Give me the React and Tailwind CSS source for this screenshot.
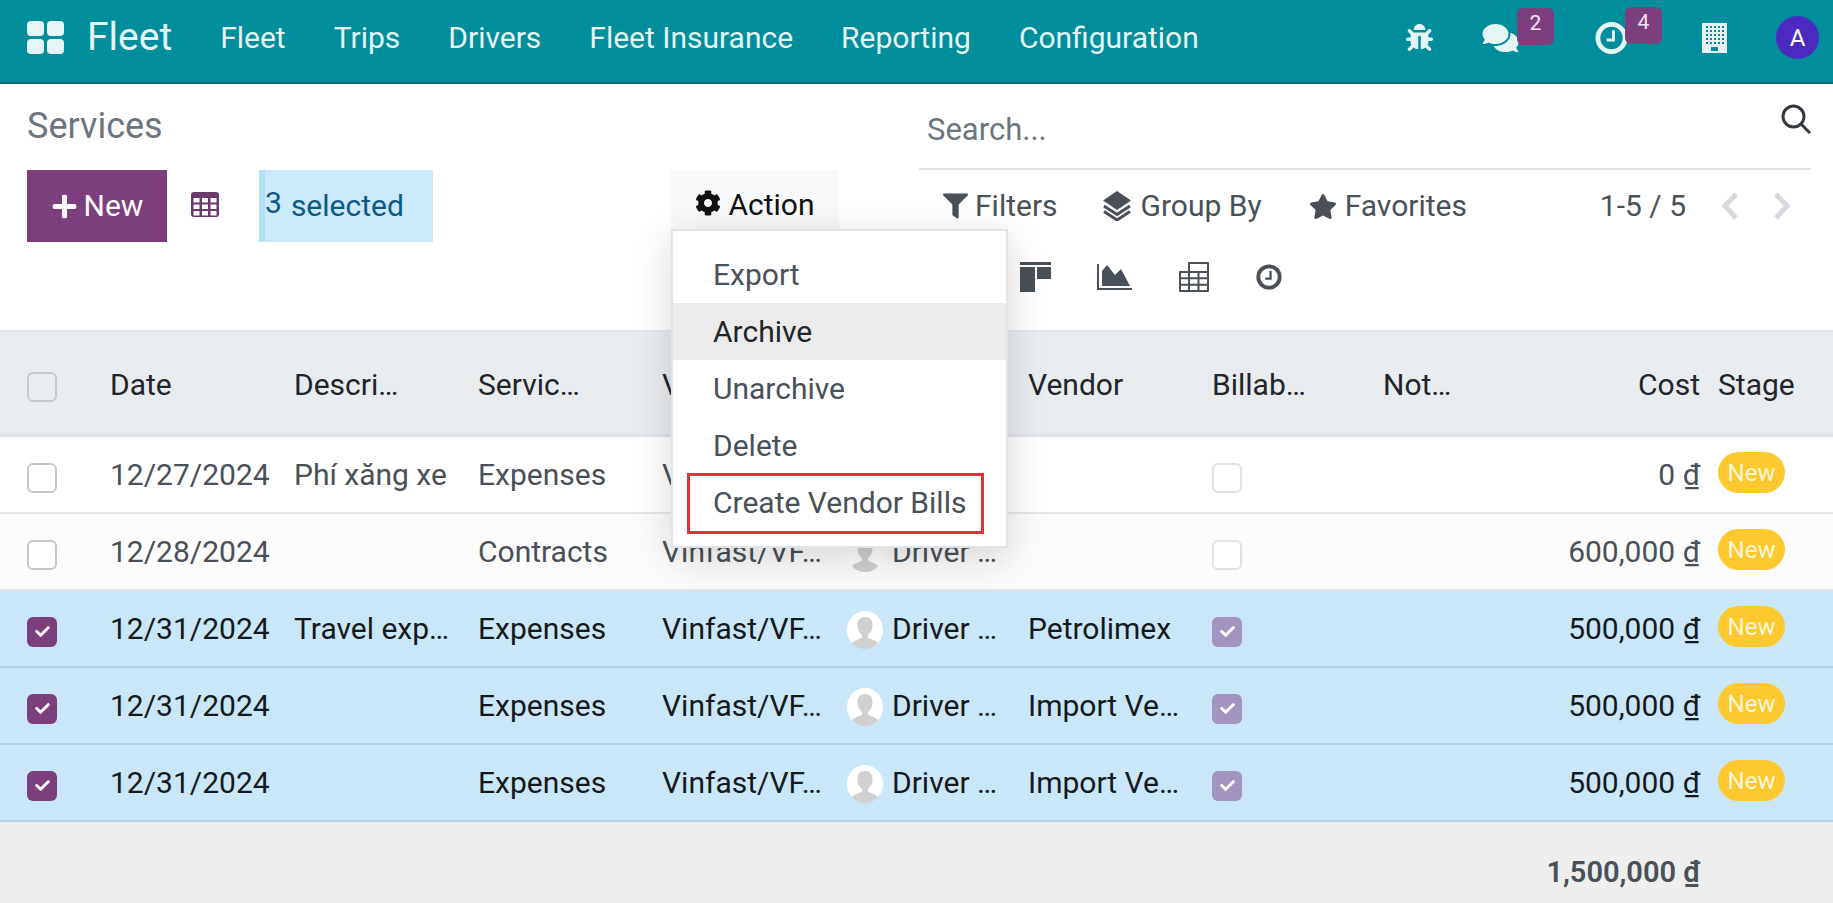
import React from 'react';
import { FaBug, FaComments, FaCog, FaFilter, FaPlus, FaStar, FaCheck } from 'react-icons/fa';

const cols = 'grid grid-cols-[110px_184px_184px_184px_185px_181px_184px_171px_117px_200px_1fr] items-center';

const rows = [
  { date: '12/27/2024', desc: 'Phí xăng xe', type: 'Expenses', vendor: '', cost: '0 ₫' },
  { date: '12/28/2024', desc: '', type: 'Contracts', vendor: '', cost: '600,000 ₫', alt: true },
  { date: '12/31/2024', desc: 'Travel exp…', type: 'Expenses', vendor: 'Petrolimex', cost: '500,000 ₫', on: true },
  { date: '12/31/2024', desc: '', type: 'Expenses', vendor: 'Import Ve…', cost: '500,000 ₫', on: true },
  { date: '12/31/2024', desc: '', type: 'Expenses', vendor: 'Import Ve…', cost: '500,000 ₫', on: true },
];

const menu = ['Fleet', 'Trips', 'Drivers', 'Fleet Insurance', 'Reporting', 'Configuration'];

const actions = ['Export', 'Archive', 'Unarchive', 'Delete', 'Create Vendor Bills'];

const AppsLogo = () => (
  <svg viewBox="0 0 37 33" className="w-[37px] h-[33px] fill-[#e5f5f6]">
    <rect x="0" y="0" width="17" height="15" rx="4" />
    <rect x="20" y="0" width="17" height="15" rx="4" />
    <rect x="0" y="18" width="17" height="15" rx="4" />
    <rect x="20" y="18" width="17" height="15" rx="4" />
  </svg>
);

const ClockIcon = ({ className, stroke }) => (
  <svg viewBox="0 0 34 34" className={className}>
    <circle cx="17" cy="17" r="14" fill="none" stroke={stroke} strokeWidth="5" />
    <path d="M19 9v10h-7" fill="none" stroke={stroke} strokeWidth="3" />
  </svg>
);

const BuildingIcon = () => (
  <svg viewBox="0 0 25 30" className="w-[25px] h-[30px]">
    <rect width="25" height="30" fill="#e5f5f6" />
    {[3, 7, 11, 15, 19].map((y) =>
      [4, 8, 12, 16, 20].map((x) => <rect key={`${x}-${y}`} x={x} y={y} width="2" height="2" fill="#018e9c" />)
    )}
    <rect x="9" y="24" width="7" height="4" fill="#018e9c" />
  </svg>
);

const ListIcon = () => (
  <svg viewBox="0 0 28 25" className="w-[28px] h-[25px]">
    <rect width="28" height="25" rx="3" fill="#6a3a6a" />
    {[6, 12.5, 19].map((y) =>
      [2.5, 11, 19.5].map((x) => <rect key={`${x}-${y}`} x={x} y={y} width="6" height="4.500" fill="#ffffff" />)
    )}
  </svg>
);

const KanbanIcon = () => (
  <svg viewBox="0 0 31 30" className="w-[31px] h-[30px] fill-[#495057]">
    <rect width="31" height="3" />
    <rect y="5" width="15" height="25" />
    <rect x="17" y="5" width="14" height="12" />
  </svg>
);

const GraphIcon = () => (
  <svg viewBox="0 0 35 26" className="w-[35px] h-[26px] fill-[#495057]">
    <path d="M0 0h2v24h33v2H0z" />
    <path d="M5 22V7l5-6 8 10 6-6 9 17z" />
  </svg>
);

const PivotIcon = () => (
  <svg viewBox="0 0 30 30" className="w-[30px] h-[30px] fill-none stroke-[#495057] stroke-2">
    <path d="M1 10h28v19H1zM10 10V1h19v9M1 16.300h28M1 22.700h28M10 10v19M19.500 10v19" strokeLinejoin="round" />
  </svg>
);

const GroupIcon = () => (
  <svg viewBox="0 0 28 30" className="w-[28px] h-[30px]">
    <path d="M14 0l14 9.500-14 9.500L0 9.500z" fill="#495057" />
    <path d="M1 15l13 8.500L27 15M1 20.500L14 29l13-8.500" fill="none" stroke="#495057" strokeWidth="3" />
  </svg>
);

const SearchIcon = () => (
  <svg viewBox="0 0 30 30" className="w-[30px] h-[30px] fill-none stroke-[#343a40] stroke-[3]">
    <circle cx="12.500" cy="12.500" r="10.500" />
    <path d="M20 20l9 9" />
  </svg>
);

const Chevron = ({ dir }) => (
  <svg viewBox="0 0 20 28" className="w-[20px] h-[28px] fill-none stroke-[#d6d9dd] stroke-[5]">
    <path d={dir === 'left' ? 'M16 2L5 14l11 12' : 'M4 2l11 12L4 26'} />
  </svg>
);

const Avatar = () => (
  <svg viewBox="0 0 36 38" className="-ml-[1px] w-[38px] h-[38px] shrink-0">
    <ellipse cx="18" cy="19" rx="18" ry="19" fill="#ffffff" />
    <path d="M18 6c-5 0-7.500 3-7.500 8 0 5 2 8 4.500 10v2.500c-3 2-8 3-10 5.500 3 4 8 6 13 6s10-2 13-6c-2-2.500-7-3.500-10-5.500V24c2.500-2 4.500-5 4.500-10 0-5-2.500-8-7.500-8z" fill="#d0d0d0" />
  </svg>
);

const Check = ({ checked, muted, header }) => {
  if (checked) {
    return (
      <span className={`flex w-[30px] h-[30px] items-center justify-center rounded-[6px] ${muted ? 'bg-[#a394bf]' : 'bg-[#7d3e7d]'}`}>
        <FaCheck className="w-[15px] h-[15px] text-white" />
      </span>
    );
  }
  return <span className={`block w-[30px] h-[30px] rounded-[6px] border-2 ${muted ? 'border-[#dfe2e6]' : 'border-[#c3c8cd]'} ${header ? 'bg-transparent' : 'bg-white'}`} />;
};

const Badge = ({ n, className }) => (
  <span className={`absolute -top-[14px] flex w-[37px] h-[37px] justify-center rounded-[6px] bg-[#7d3e7d] text-[21px] leading-[30px] text-[#f1e4f1] ${className}`}>
    {n}
  </span>
);

const Row = ({ r }) => {
  const tone = r.on
    ? 'bg-[#c9e7f8] text-[#16191c] border-[#afd2e6]'
    : r.alt
      ? 'bg-[#fcfcfc] text-[#495057] border-[#e3e6e9]'
      : 'bg-white text-[#495057] border-[#e3e6e9]';
  return (
    <div className={`${cols} h-[77px] border-b-2 ${tone}`}>
      <div className="pl-[27px] pt-[6px]">
        <Check checked={r.on} />
      </div>
      <div>{r.date}</div>
      <div>{r.desc}</div>
      <div>{r.type}</div>
      <div>Vinfast/VF…</div>
      <div className="flex items-center gap-[8px]">
        <span className="pt-[2px]">
          <Avatar />
        </span>
        <span>Driver …</span>
      </div>
      <div>{r.vendor}</div>
      <div className="pt-[6px]">
        <Check checked={r.on} muted />
      </div>
      <div />
      <div className="text-right">{r.cost}</div>
      <div className="pl-[18px] pb-[4px]">
        <span className="flex w-[67px] h-[41px] items-center justify-center rounded-full bg-[#fdc92f] text-[24px] text-[#fff6d8]">New</span>
      </div>
    </div>
  );
};

export default function App() {
  return (
    <div className="h-[903px] w-full overflow-hidden bg-white font-['Roboto',sans-serif] text-[30px] leading-none">
      {/* Top bar */}
      <header className="flex h-[84px] items-center border-b-2 border-[#01656f] bg-[#018e9c] pb-[7px] pl-[27px] pr-[14px] text-[#e5f5f6]">
        <AppsLogo />
        <span className="ml-[23px] text-[39px]">Fleet</span>
        <nav className="ml-[48px] flex gap-[48px]">
          {menu.map((m) => (
            <span key={m}>{m}</span>
          ))}
        </nav>
        <div className="ml-auto flex items-center">
          <FaBug className="mr-[48px] h-[27px] w-[27px]" />
          <div className="relative mr-[75px]">
            <FaComments className="h-[32px] w-[39px]" />
            <Badge n="2" className="left-[36px]" />
          </div>
          <div className="relative mr-[74px]">
            <ClockIcon className="h-[34px] w-[33px]" stroke="#e5f5f6" />
            <Badge n="4" className="left-[30px]" />
          </div>
          <BuildingIcon />
          <span className="ml-[49px] flex h-[43px] w-[43px] items-center justify-center rounded-full bg-[#4c2ac0] text-[24px] text-white">A</span>
        </div>
      </header>

      {/* Control panel */}
      <section className="flex h-[247px] border-b border-[#dfe2e6]">
        <div className="w-[919px] shrink-0 pl-[27px]">
          <div className="flex h-[86px] items-center pb-[2px] text-[36px] text-[#6c757d]">Services</div>
          <div className="flex items-start">
            <button className="flex h-[72px] w-[140px] items-center justify-center gap-[6px] bg-[#7d3e7d] text-white">
              <FaPlus className="h-[27px] w-[27px]" />
              New
            </button>
            <span className="ml-[24px] mt-[22px]">
              <ListIcon />
            </span>
            <div className="ml-[40px] flex h-[72px] w-[174px] items-center gap-[9px] border-l-[6px] border-[#b3def5] bg-[#cce9f9] text-[#0a5a85]">
              <span className="mb-[6px]">3</span>
              <span>selected</span>
            </div>
            <div className="relative ml-[238px]">
              <button className="flex h-[59px] w-[168px] items-start justify-center gap-[7px] bg-[#f8f9fa] pt-[20px] text-[#111111]">
                <FaCog className="h-[26px] w-[26px]" />
                Action
              </button>
              <div className="absolute left-0 top-full z-10 w-[337px] border-2 border-[#e1e4e7] bg-white py-[15px] text-[#495057] shadow-[0_10px_36px_rgba(0,0,0,0.16)]">
                {actions.map((a) => (
                  <div
                    key={a}
                    className={`flex h-[57px] items-center pl-[40px] pt-[1px] ${a === 'Archive' ? 'bg-[#ebebeb] text-[#212529]' : ''}`}
                  >
                    {a}
                  </div>
                ))}
                <div className="absolute bottom-[12px] left-[14px] h-[61px] w-[297px] border-[3px] border-[#e3303a]" />
              </div>
            </div>
          </div>
        </div>
        <div className="min-w-0 flex-1 pr-[22px] text-[#495057]">
          <div className="flex h-[86px] items-center justify-between border-b-2 border-[#dfe2e6] pl-[8px] text-[31px] text-[#6c757d]">
            <span className="pt-[6px]">Search...</span>
            <span className="pb-[14px]">
              <SearchIcon />
            </span>
          </div>
          <div className="flex h-[72px] items-center pl-[24px]">
            <FaFilter className="h-[26px] w-[25px]" />
            <span className="ml-[7px]">Filters</span>
            <span className="ml-[45px]">
              <GroupIcon />
            </span>
            <span className="ml-[10px]">Group By</span>
            <FaStar className="ml-[47px] h-[27px] w-[28px]" />
            <span className="ml-[8px]">Favorites</span>
            <span className="ml-auto">1-5 / 5</span>
            <span className="ml-[34px]">
              <Chevron dir="left" />
            </span>
            <span className="ml-[32px] mr-[19px]">
              <Chevron dir="right" />
            </span>
          </div>
          <div className="flex items-center pl-[101px] pt-[20px]">
            <KanbanIcon />
            <span className="ml-[46px]">
              <GraphIcon />
            </span>
            <span className="ml-[47px]">
              <PivotIcon />
            </span>
            <ClockIcon className="ml-[47px] h-[26px] w-[26px]" stroke="#495057" />
          </div>
        </div>
      </section>

      {/* List */}
      <div className={`${cols} h-[106px] border-b-[3px] border-[#dfe2e6] bg-[#e9ecef] pt-[5px] text-[#212529]`}>
        <div className="pl-[27px] pt-[4px]">
          <Check header />
        </div>
        <div>Date</div>
        <div>Descri…</div>
        <div>Servic…</div>
        <div>Vehicle</div>
        <div>Driver</div>
        <div>Vendor</div>
        <div>Billab…</div>
        <div>Not…</div>
        <div className="text-right">Cost</div>
        <div className="pl-[18px]">Stage</div>
      </div>
      {rows.map((r, i) => (
        <Row key={i} r={r} />
      ))}
      <div className="h-[83px] bg-[#eeeeee] pr-[133px] pt-[36px] text-right text-[29px] font-semibold text-[#495057]">1,500,000 ₫</div>
    </div>
  );
}
